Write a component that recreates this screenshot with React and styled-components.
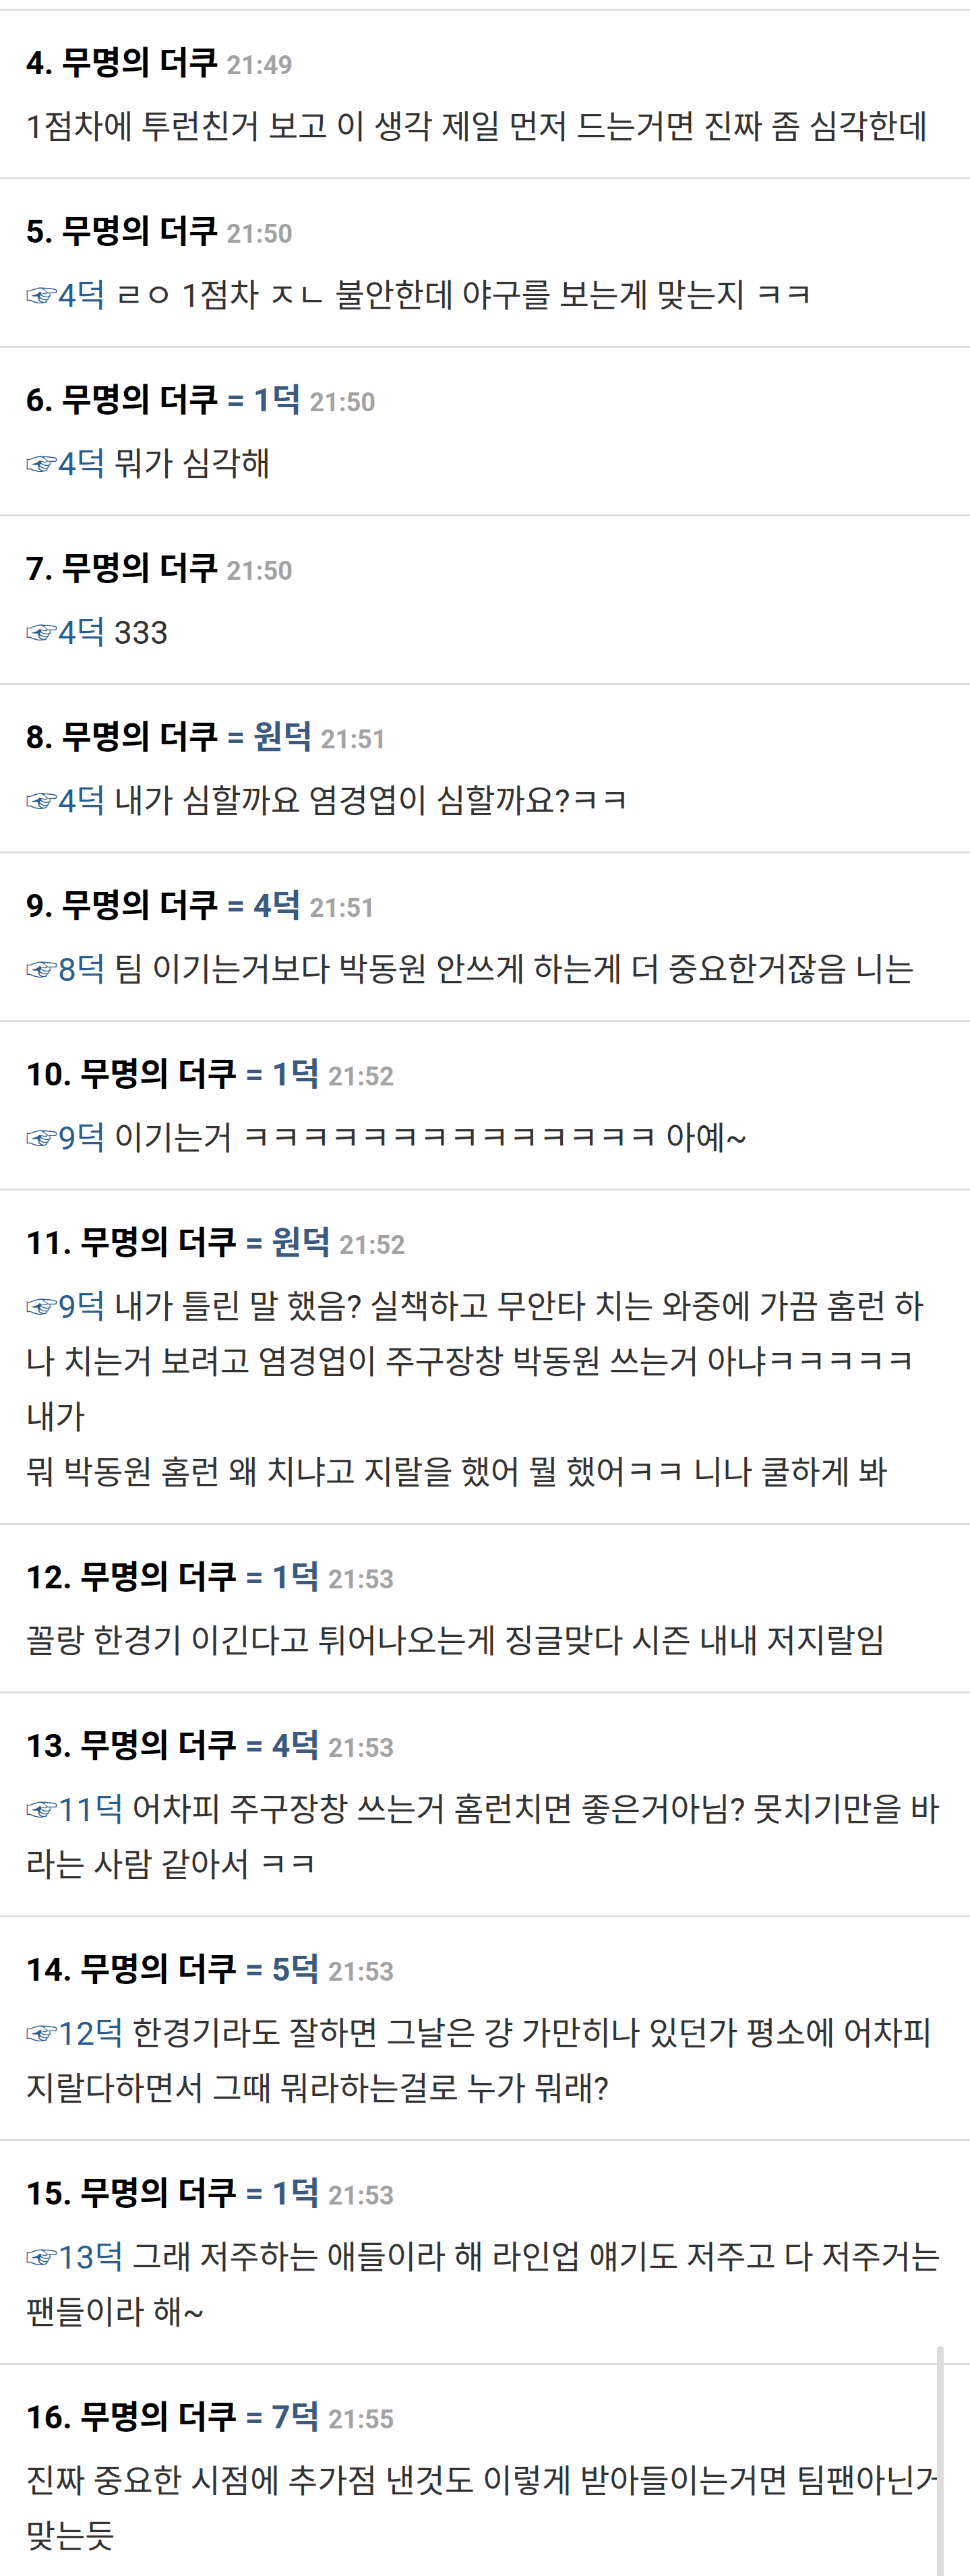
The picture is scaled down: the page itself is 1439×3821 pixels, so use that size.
import React from "react";
import styled, { createGlobalStyle } from "styled-components";

const GlobalStyle = createGlobalStyle`
  html, body {
    margin: 0;
    padding: 0;
    background: #ffffff;
    overflow: hidden;
  }
  body {
    font-family: Roboto, "Noto Sans CJK KR", sans-serif;
  }
`;

const comments = [
  { no: 4, time: "21:49", text: "1점차에 투런친거 보고 이 생각 제일 먼저 드는거면 진짜 좀 심각한데" },
  { no: 5, time: "21:50", reply: "4덕", text: "ㄹㅇ 1점차 ㅈㄴ 불안한데 야구를 보는게 맞는지 ㅋㅋ" },
  { no: 6, tag: "1덕", time: "21:50", reply: "4덕", text: "뭐가 심각해" },
  { no: 7, time: "21:50", reply: "4덕", text: "333" },
  { no: 8, tag: "원덕", time: "21:51", reply: "4덕", text: "내가 심할까요 염경엽이 심할까요?ㅋㅋ" },
  { no: 9, tag: "4덕", time: "21:51", reply: "8덕", text: "팀 이기는거보다 박동원 안쓰게 하는게 더 중요한거잖음 니는" },
  { no: 10, tag: "1덕", time: "21:52", reply: "9덕", text: "이기는거 ㅋㅋㅋㅋㅋㅋㅋㅋㅋㅋㅋㅋㅋㅋ 아예~" },
  {
    no: 11,
    tag: "원덕",
    time: "21:52",
    reply: "9덕",
    text: "내가 틀린 말 했음? 실책하고 무안타 치는 와중에 가끔 홈런 하나 치는거 보려고 염경엽이 주구장창 박동원 쓰는거 아냐ㅋㅋㅋㅋㅋ 내가\n뭐 박동원 홈런 왜 치냐고 지랄을 했어 뭘 했어ㅋㅋ 니나 쿨하게 봐",
  },
  { no: 12, tag: "1덕", time: "21:53", text: "꼴랑 한경기 이긴다고 튀어나오는게 징글맞다 시즌 내내 저지랄임" },
  {
    no: 13,
    tag: "4덕",
    time: "21:53",
    reply: "11덕",
    text: "어차피 주구장창 쓰는거 홈런치면 좋은거아님? 못치기만을 바라는 사람 같아서 ㅋㅋ",
  },
  {
    no: 14,
    tag: "5덕",
    time: "21:53",
    reply: "12덕",
    text: "한경기라도 잘하면 그날은 걍 가만히나 있던가 평소에 어차피 지랄다하면서 그때 뭐라하는걸로 누가 뭐래?",
  },
  {
    no: 15,
    tag: "1덕",
    time: "21:53",
    reply: "13덕",
    text: "그래 저주하는 애들이라 해 라인업 얘기도 저주고 다 저주거는 팬들이라 해~",
  },
  {
    no: 16,
    tag: "7덕",
    time: "21:55",
    text: "진짜 중요한 시점에 추가점 낸것도 이렇게 받아들이는거면 팀팬아닌거 맞는듯",
  },
];

const App = () => {
  return (
    <Page lang="ko">
      <GlobalStyle />
      <List>
        {comments.map((c) => (
          <Comment key={c.no}>
            <Head>
              {c.no}. 무명의 더쿠{" "}
              {c.tag && <Tag>= {c.tag} </Tag>}
              <Time>{c.time}</Time>
            </Head>
            <Body>
              {c.reply && <Reply>☞{c.reply}</Reply>}
              {c.reply ? " " : ""}
              {c.text}
            </Body>
          </Comment>
        ))}
      </List>
      <ScrollThumb />
    </Page>
  );
};

export default App;

const Page = styled.div`
  position: relative;
  height: 100vh;
  overflow: hidden;
  background: #ffffff;
`;

const List = styled.div`
  padding-top: 13px;
`;

const Comment = styled.div`
  border-top: 3px solid #dedede;
  padding: 48px 31px 33px 38px;
`;

const Head = styled.div`
  height: 60px;
  font-family: Roboto, "Noto Sans CJK KR", sans-serif;
  font-size: 48px;
  font-weight: 700;
  line-height: 60px;
  color: #000000;
  white-space: nowrap;
`;

const Tag = styled.span`
  color: #3b5a7e;
`;

const Time = styled.span`
  font-size: 38px;
  line-height: 1;
  color: #a3a3a3;
`;

const Body = styled.div`
  margin-top: 24px;
  font-family: Roboto, "Noto Sans CJK KR", sans-serif;
  font-size: 48px;
  line-height: 82px;
  color: #333333;
  white-space: pre-line;
`;

const Reply = styled.span`
  color: #2c5d8f;
`;

const ScrollThumb = styled.div`
  position: absolute;
  right: 39px;
  bottom: 0;
  width: 10px;
  height: 341px;
  border-radius: 5px 5px 0 0;
  background: #dcdcdc;
`;
